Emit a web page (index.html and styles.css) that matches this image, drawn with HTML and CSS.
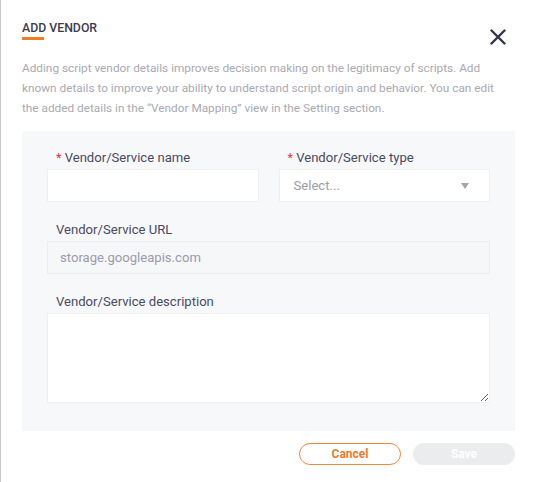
FILE: index.html
```html
<!DOCTYPE html>
<html>
  <head>
    <title>Add vendor</title>
    <meta name="viewport" content="width=device-width, initial-scale=1">
    <link rel="stylesheet" href="styles.css">
  </head>
  <body>
    <div class="dialog">
      <div class="dialog-header">
        <h2 class="dialog-title">ADD VENDOR</h2>
        <button class="close" type="button" aria-label="Close">
          <svg width="16" height="16" viewBox="0 0 16 16">
            <path d="M1.5 1.5 L14.5 14.5 M14.5 1.5 L1.5 14.5" stroke="#33334a" stroke-width="2.4" stroke-linecap="round" fill="none"/>
          </svg>
        </button>
      </div>
      <p class="intro">Adding script vendor details improves decision making on the legitimacy of scripts. Add known details to improve your ability to understand script origin and behavior. You can edit the added details in the “Vendor Mapping” view in the Setting section.</p>
      <form class="panel">
        <div class="row">
          <div class="field">
            <label for="vendorName"><span class="req">*</span> Vendor/Service name</label>
            <input id="vendorName" class="input" type="text">
          </div>
          <div class="field">
            <label for="vendorType"><span class="req">*</span> Vendor/Service type</label>
            <div class="select" id="vendorType">
              <span>Select...</span>
              <span class="caret"></span>
            </div>
          </div>
        </div>
        <div class="field">
          <label for="vendorUrl">Vendor/Service URL</label>
          <input id="vendorUrl" class="input input-disabled" type="text" value="storage.googleapis.com" disabled>
        </div>
        <div class="field">
          <label for="vendorDesc">Vendor/Service description</label>
          <textarea id="vendorDesc" class="input textarea"></textarea>
        </div>
      </form>
      <div class="actions">
        <button class="btn btn-cancel" type="button">Cancel</button>
        <button class="btn btn-save" type="button" disabled>Save</button>
      </div>
    </div>
  </body>
</html>
```

FILE: styles.css
```css
html, body {
  margin: 0;
  background: #ffffff;
  font-family: Roboto, "Noto Sans", sans-serif;
}
.dialog {
  box-sizing: border-box;
  width: 535px;
  height: 482px;
  padding: 20px 20px 0 21px;
  border-left: 1px solid #c9c9cc;
}
.dialog-header {
  display: flex;
  justify-content: space-between;
  align-items: flex-start;
  height: 38px;
}
.dialog-title {
  margin: 0;
  padding-top: 1px;
  font-size: 12.3px;
  font-weight: 500;
  line-height: 14px;
  color: #3b3b4e;
}
.dialog-title::after {
  content: "";
  display: block;
  width: 22px;
  height: 3px;
  margin-top: 2px;
  background: #f07d22;
}
.close {
  margin: 9px 9px 0 0;
  padding: 0;
  border: 0;
  background: none;
  line-height: 0;
}
.intro {
  max-width: 480px;
  margin: 0 0 13px;
  font-size: 11.8px;
  line-height: 20px;
  color: #a9a9b2;
}
.panel {
  padding: 19px 25px 28px;
  background: #f7f8fa;
}
.row {
  display: flex;
  gap: 20px;
}
.row .field {
  flex: 1;
}
.field {
  display: flex;
  flex-direction: column;
  margin-bottom: 20px;
}
.field:last-child {
  margin-bottom: 0;
}
.field label {
  padding-left: 9px;
  margin-bottom: 3px;
  font-size: 13.1px;
  line-height: 16px;
  color: #4a4a5f;
}
.req {
  color: #e8343a;
  font-size: 12.5px;
}
.input {
  box-sizing: border-box;
  height: 33px;
  padding: 0 12px;
  border: 1px solid #eef0f3;
  background: #ffffff;
  font-family: inherit;
  font-size: 13.1px;
  color: #3b3b4e;
  outline: none;
}
.input-disabled {
  background: #f6f7f9;
  border-color: #ebedf0;
  color: #9a9aac;
}
.textarea {
  height: 90px;
  resize: vertical;
}
.select {
  box-sizing: border-box;
  display: flex;
  justify-content: space-between;
  align-items: center;
  height: 33px;
  padding: 0 20px 0 14px;
  border: 1px solid #eef0f3;
  background: #ffffff;
  font-size: 13.1px;
  color: #9c9ca6;
}
.caret {
  width: 0;
  height: 0;
  border-left: 4.5px solid transparent;
  border-right: 4.5px solid transparent;
  border-top: 6px solid #a3a6af;
}
.actions {
  display: flex;
  justify-content: flex-end;
  gap: 12px;
  margin-top: 12px;
}
.btn {
  box-sizing: border-box;
  width: 102px;
  height: 22px;
  border-radius: 11px;
  font-family: inherit;
  font-size: 12px;
  font-weight: 700;
}
.btn-cancel {
  border: 1.5px solid #f08a3e;
  background: #ffffff;
  color: #ee7a2c;
}
.btn-save {
  border: 0;
  background: #ebecee;
  color: #ffffff;
}
```
